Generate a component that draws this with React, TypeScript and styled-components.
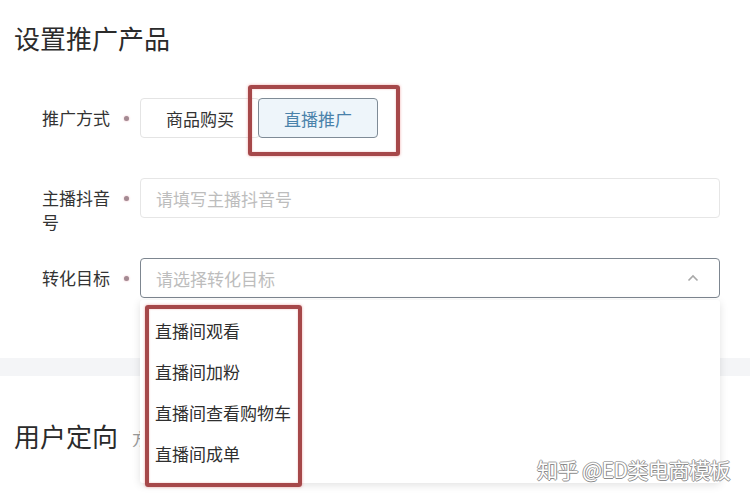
import styled, { createGlobalStyle } from "styled-components";

const GlobalStyle = createGlobalStyle`
  html, body {
    margin: 0;
    padding: 0;
    background: #ffffff;
    font-family: "Noto Sans CJK SC", "Noto Sans", "Liberation Sans", sans-serif;
    color: #333333;
  }
`;

const goals = ["直播间观看", "直播间加粉", "直播间查看购物车", "直播间成单"];

export default function App() {
  return (
    <Page>
      <GlobalStyle />
      <Section>
        <Title>设置推广产品</Title>
        <Form>
          <Row>
            <Label>推广方式</Label>
            <Required />
            <Toggle>
              <ToggleButton>商品购买</ToggleButton>
              <ToggleButton active>
                直播推广
                <Mark style={{ left: -11, top: -14, right: -23, bottom: -19 }} />
              </ToggleButton>
            </Toggle>
          </Row>
          <Row>
            <Label>主播抖音号</Label>
            <Required />
            <Field>
              <Placeholder>请填写主播抖音号</Placeholder>
            </Field>
          </Row>
          <Row>
            <Label>转化目标</Label>
            <Required />
            <SelectWrap>
              <Field focused>
                <Placeholder>请选择转化目标</Placeholder>
                <svg width="12" height="8" viewBox="0 0 12 8">
                  <polyline points="1.5,6.5 6,2 10.5,6.5" fill="none" stroke="#a8a8a8" strokeWidth="1.6" />
                </svg>
              </Field>
              <Menu>
                {goals.map((g) => (
                  <Option key={g}>{g}</Option>
                ))}
                <Mark style={{ left: 5, top: 5, width: 157, height: 182 }} />
              </Menu>
            </SelectWrap>
          </Row>
        </Form>
      </Section>
      <Band />
      <Section second>
        <Title>
          用户定向<SubTitle>方</SubTitle>
        </Title>
      </Section>
      <Watermark>知乎 @ED类电商模板</Watermark>
    </Page>
  );
}

const Page = styled.div`
  position: relative;
  width: 750px;
  height: 500px;
  overflow: hidden;
  background: #fff;
`;

const Section = styled.div<{ second?: boolean }>`
  padding: ${(p) => (p.second ? "40px 30px 0 14px" : "20px 30px 60px 14px")};
`;

const Title = styled.div`
  font-size: 26px;
  line-height: 36px;
  color: #2b2b2b;
  display: flex;
  align-items: center;
`;

const SubTitle = styled.span`
  font-size: 16px;
  color: #9a9a9a;
  margin-left: 14px;
  margin-top: 4px;
`;

const Form = styled.div`
  display: flex;
  flex-direction: column;
  gap: 40px;
  margin-top: 42px;
  padding-left: 28px;
`;

const Row = styled.div`
  display: flex;
  align-items: flex-start;
  height: 40px;
`;

const Label = styled.div`
  width: 70px;
  font-size: 17px;
  line-height: 24px;
  padding-top: 8px;
  color: #333;
  word-break: break-all;
`;

const Required = styled.span`
  width: 28px;
  height: 40px;
  display: flex;
  align-items: center;
  justify-content: center;
  &::after {
    content: "";
    width: 5px;
    height: 5px;
    border-radius: 50%;
    background: #a38a92;
    box-shadow: 0 0 2px rgba(220, 120, 140, 0.6);
  }
`;

const Toggle = styled.div`
  display: flex;
`;

const ToggleButton = styled.div<{ active?: boolean }>`
  position: relative;
  width: 120px;
  height: 40px;
  box-sizing: border-box;
  display: flex;
  align-items: center;
  justify-content: center;
  font-size: 17px;
  border-radius: 4px;
  margin-left: ${(p) => (p.active ? "-2px" : "0")};
  border: 1px solid ${(p) => (p.active ? "#7f8b96" : "#e4e4e4")};
  background: ${(p) => (p.active ? "#eef5fa" : "#fff")};
  color: ${(p) => (p.active ? "#4a82aa" : "#333")};
`;

const Field = styled.div<{ focused?: boolean }>`
  flex: 1;
  height: 40px;
  box-sizing: border-box;
  display: flex;
  align-items: center;
  justify-content: space-between;
  padding: 0 20px 0 15px;
  border-radius: 4px;
  border: ${(p) => (p.focused ? "1.5px solid #7d8690" : "1px solid #e6e6e6")};
  background: #fff;
`;

const Placeholder = styled.span`
  font-size: 17px;
  color: #bdbdbd;
`;

const SelectWrap = styled.div`
  position: relative;
  flex: 1;
  display: flex;
`;

const Menu = styled.div`
  position: absolute;
  z-index: 10;
  top: 42px;
  left: 0;
  right: 0;
  height: 183px;
  box-sizing: border-box;
  padding-top: 10px;
  background: #fff;
  border-radius: 3px;
  box-shadow: 0 2px 8px rgba(0, 0, 0, 0.12);
`;

const Option = styled.div`
  height: 41px;
  display: flex;
  align-items: center;
  padding-left: 15px;
  font-size: 17px;
  color: #2f2f2f;
`;

const Mark = styled.div`
  position: absolute;
  box-sizing: border-box;
  border: 4px solid #a6484a;
  border-radius: 3px;
  box-shadow: 0 0 3px rgba(230, 110, 110, 0.6), inset 0 0 2px rgba(230, 110, 110, 0.5);
  pointer-events: none;
`;

const Band = styled.div`
  height: 18px;
  background: #f4f5f7;
`;

const Watermark = styled.div`
  position: absolute;
  z-index: 20;
  right: 20px;
  bottom: 16px;
  font-size: 21px;
  color: #fff;
  letter-spacing: -0.5px;
  text-shadow: 1px 0 0 #8a8a8a, -1px 0 0 #9a9a9a, 0 1px 0 #8a8a8a, 0 -1px 0 #b0b0b0;
`;
